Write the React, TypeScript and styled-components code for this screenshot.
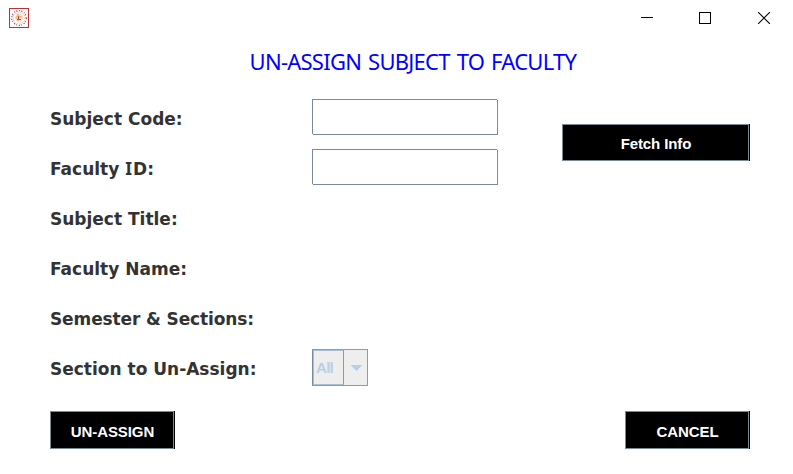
import React from 'react';
import styled, { createGlobalStyle } from 'styled-components';

const GlobalStyle = createGlobalStyle`
  * { box-sizing: border-box; }
  body { margin: 0; background: #fff; overflow: hidden; }
`;

const Window = styled.main`
  width: 793px;
  height: 474px;
  background: #fff;
  display: flex;
  flex-direction: column;
  overflow: hidden;
`;

const TitleBar = styled.header`
  height: 36px;
  flex: none;
  display: flex;
  justify-content: space-between;
  padding: 8px 23px 0 9px;
`;

const WindowControls = styled.div`
  display: flex;
  gap: 46px;
  padding-top: 4px;
  svg { display: block; }
  svg:not(:last-child) { margin-left: -1px; margin-right: 1px; }
`;

const Heading = styled.h1`
  margin: 0;
  height: 63px;
  flex: none;
  padding: 10px 0 0 249.6px;
  font: 400 22px/30px 'Noto Sans', sans-serif;
  letter-spacing: -0.75px;
  word-spacing: 2px;
  color: #00f;
  white-space: nowrap;
`;

const Body = styled.div`
  display: flex;
  height: 312px;
  flex: none;
  padding-left: 50px;
`;

const Form = styled.div`
  width: 512px;
`;

const Row = styled.div`
  display: flex;
  height: 50px;
`;

const Label = styled.label<{ $spacing?: number }>`
  width: 262px;
  height: 41px;
  font: 700 17px/41px 'DejaVu Sans', sans-serif;
  letter-spacing: ${(p) => p.$spacing ?? 0}px;
  color: #333;
  white-space: nowrap;
`;

const SerifedCapital = styled.span`
  font-family: 'Noto Sans', sans-serif;
  font-size: 17.5px;
  line-height: 1;
  letter-spacing: 1px;
`;

const Field = styled.input`
  width: 186px;
  height: 36px;
  padding: 0 4px;
  border: 0;
  border-radius: 0;
  outline: 0;
  font: 16px 'Liberation Sans', sans-serif;
  background:
    linear-gradient(#eee, #eee) 100% 0 / 1px 1px no-repeat,
    linear-gradient(#eee, #eee) 0 100% / 1px 1px no-repeat,
    linear-gradient(#7a8a99, #7a8a99) 0 0 / 100% 1px no-repeat,
    linear-gradient(#7a8a99, #7a8a99) 0 100% / 100% 1px no-repeat,
    linear-gradient(#7a8a99, #7a8a99) 0 0 / 1px 100% no-repeat,
    linear-gradient(#7a8a99, #7a8a99) 100% 0 / 1px 100% no-repeat,
    #fff;
`;

const Combo = styled.div`
  display: flex;
  width: 56px;
  height: 37px;
  border: 1px solid #999;
  border-left-color: #7a8a99;
  background: #eee;
`;

const ComboValue = styled.span`
  width: 31px;
  border: 1px solid #a3bfdc;
  border-right: 1px solid #7f9dbb;
  padding-left: 2px;
  font: 700 15px/34px 'Liberation Sans', sans-serif;
  letter-spacing: -0.7px;
  color: #b8cfe5;
`;

const ComboArrow = styled.span`
  flex: 1;
  display: flex;
  align-items: center;
  justify-content: center;
`;

const Button = styled.button<{ $width: number; $height: number; $top: number }>`
  width: ${(p) => p.$width}px;
  height: ${(p) => p.$height}px;
  padding: ${(p) => p.$top}px 0 0 1px;
  border: 1px solid #7a8a99;
  border-radius: 0;
  box-shadow: 1px 0 #000;
  background: #000;
  color: #fff;
  font: 700 15px/17px 'Liberation Sans', sans-serif;
  letter-spacing: -0.1px;
`;

const SideActions = styled.div`
  padding-top: 25px;
`;

const Footer = styled.footer`
  display: flex;
  justify-content: space-between;
  padding: 0 44px 0 50px;
`;

const AppIcon = () => (
  <svg width="20" height="20" viewBox="0 0 20 20">
    <rect x=".5" y=".5" width="19" height="19" fill="#fffafa" stroke="#b93232" />
    <circle cx="10" cy="10" r="7.3" fill="none" stroke="#b43b52" strokeWidth="1.2" strokeDasharray="1.2 2 .8 1.2" />
    <circle cx="10" cy="10" r="6" fill="none" stroke="#dfa0a8" strokeWidth="1" strokeDasharray="1 1.6" />
    <path d="M8 5h3v1h2v2h1v3h-1v2h-1v1H8v-1H7v-2H6V8h1V6h1z" fill="#f5e3c4" />
    <path d="M8 6h2v2h3v2h-3v3H8v-2H7V8h1z" fill="#e9c28d" />
    <path d="M9 8h1v3h2v1H8v-1h1z" fill="#b05342" />
  </svg>
);

const rows: { label: React.ReactNode; name: string; spacing?: number; control?: 'field' | 'combo' }[] = [
  { name: 'Subject Code', label: 'Subject Code:', control: 'field' },
  { name: 'Faculty ID', label: <>Faculty <SerifedCapital>I</SerifedCapital>D:</>, control: 'field' },
  { name: 'Subject Title', label: 'Subject Title:' },
  { name: 'Faculty Name', label: 'Faculty Name:' },
  { name: 'Semester & Sections', label: 'Semester & Sections:', spacing: -0.12 },
  { name: 'Section to Un-Assign', label: 'Section to Un-Assign:', control: 'combo' },
];

export default function App() {
  return (
    <Window>
      <GlobalStyle />
      <TitleBar>
        <AppIcon />
        <WindowControls>
          <svg width="12" height="12" shapeRendering="crispEdges"><path d="M0 5.5h12" stroke="#000" /></svg>
          <svg width="12" height="12" shapeRendering="crispEdges"><rect x=".5" y=".5" width="11" height="11" fill="none" stroke="#000" /></svg>
          <svg width="12" height="12"><path d="M0 0l12 12M12 0L0 12" stroke="#000" strokeWidth="1.1" /></svg>
        </WindowControls>
      </TitleBar>
      <Heading>UN-ASSIGN SUBJECT TO FACULTY</Heading>
      <Body>
        <Form>
          {rows.map((row) => (
            <Row key={row.name}>
              <Label $spacing={row.spacing}>{row.label}</Label>
              {row.control === 'field' && <Field aria-label={row.name} />}
              {row.control === 'combo' && (
                <Combo>
                  <ComboValue>All</ComboValue>
                  <ComboArrow>
                    <svg width="12" height="6" shapeRendering="crispEdges"><path d="M0 0h12L6 6z" fill="#b8cfe5" /></svg>
                  </ComboArrow>
                </Combo>
              )}
            </Row>
          ))}
        </Form>
        <SideActions>
          <Button $width={187} $height={37} $top={2}>Fetch Info</Button>
        </SideActions>
      </Body>
      <Footer>
        <Button $width={124} $height={38} $top={3}>UN-ASSIGN</Button>
        <Button $width={124} $height={38} $top={3}>CANCEL</Button>
      </Footer>
    </Window>
  );
}
